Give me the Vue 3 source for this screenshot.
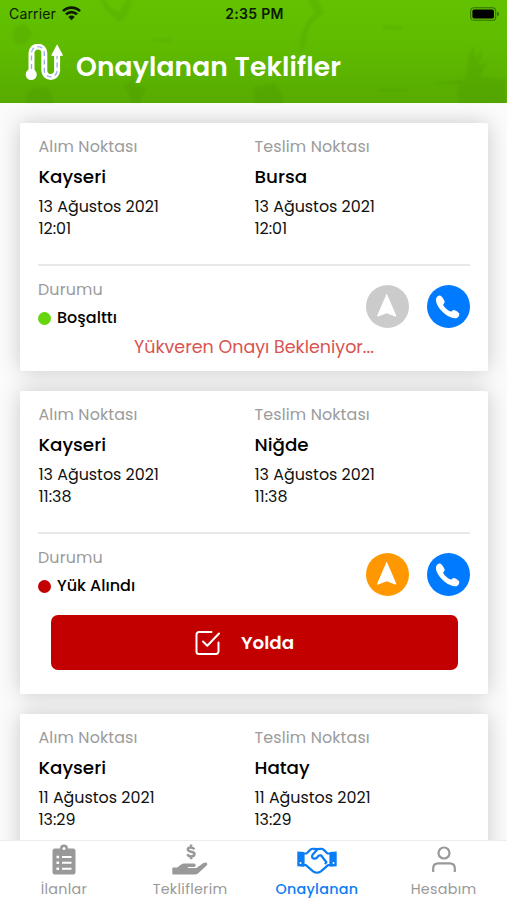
<script setup>
import { ref } from "vue";

const offers = ref([
  {
    id: 1,
    from: { label: "Alım Noktası", city: "Kayseri", date: "13 Ağustos 2021", time: "12:01" },
    to: { label: "Teslim Noktası", city: "Bursa", date: "13 Ağustos 2021", time: "12:01" },
    status: "Boşalttı",
    statusClass: "green",
    navActive: false,
    note: "Yükveren Onayı Bekleniyor...",
  },
  {
    id: 2,
    from: { label: "Alım Noktası", city: "Kayseri", date: "13 Ağustos 2021", time: "11:38" },
    to: { label: "Teslim Noktası", city: "Niğde", date: "13 Ağustos 2021", time: "11:38" },
    status: "Yük Alındı",
    statusClass: "red",
    navActive: true,
    action: "Yolda",
  },
  {
    id: 3,
    from: { label: "Alım Noktası", city: "Kayseri", date: "11 Ağustos 2021", time: "13:29" },
    to: { label: "Teslim Noktası", city: "Hatay", date: "11 Ağustos 2021", time: "13:29" },
  },
]);

const tabs = [
  { key: "list", label: "İlanlar" },
  { key: "offers", label: "Tekliflerim" },
  { key: "approved", label: "Onaylanan" },
  { key: "account", label: "Hesabım" },
];

const activeTab = ref("approved");
</script>

<template>
  <div class="screen">
    <header class="header">
      <svg class="header-map" viewBox="0 0 507 104" preserveAspectRatio="none">
        <path d="M100 0l6 10 13 12 8-6 5-16h-5l-7 12-10-4-5-8z" />
        <path d="M14 29q8-8 14-2l4 7-7 10q-9 3-12-5z" />
        <path d="M308 0h10l5 13-11 10-5 10-2 13-5 7 1-16 6-16 8-7z" />
        <path d="M466 80l3-25 5-9 1 14 8-11-4 17 8-3-7 14 25 3v24h-46l-1-18-25-2z" />
        <path d="M123 87l6-4 4-6 3 9 12 4-6 6-2 8h-8l-3-9z" />
        <path d="M28 94q8-9 20-5l6 15H25z" />
        <path d="M254 88l20-4 8 10 1 10h-29z" />
        <path d="M152 40h20v2h-20zM382 26l20 1v3l-18-1zM378 90h30v2h-30z" />
      </svg>

      <div class="status-bar">
        <div class="carrier">
          <span>Carrier</span>
          <svg width="19" height="15" viewBox="0 0 19 15">
            <path d="M1 5.2a12 12 0 0 1 17 0M4 8.4a7.8 7.8 0 0 1 11 0" fill="none" stroke="#0b1a00" stroke-width="2.6" />
            <path d="M6.3 10.9a4.6 4.6 0 0 1 6.4 0L9.5 14.3z" fill="#0b1a00" />
          </svg>
        </div>
        <span class="clock">2:35 PM</span>
        <svg class="battery" width="30" height="14" viewBox="0 0 30 14">
          <rect x=".7" y=".7" width="25" height="12.6" rx="3.4" fill="none" stroke="#347000" stroke-width="1.1" />
          <rect x="2.4" y="2.4" width="21.6" height="9.2" rx="1.8" fill="#000" />
          <path d="M27.2 4.8q2 .6 2 2.2t-2 2.2z" fill="#347000" />
        </svg>
      </div>

      <div class="title-row">
        <svg class="route" width="40" height="38" viewBox="0 0 40 38">
          <path d="M7.500 29V9a6.400 6.400 0 0 1 12.800 0V26.500a6.400 6.400 0 0 0 12.800 0V9" fill="none" stroke="#fff" stroke-width="6" />
          <circle cx="7.200" cy="30.500" r="5.500" fill="#fff" />
          <path d="M33.100.3l6 11.200q-6 1.600-12 0z" fill="#fff" />
          <path d="M7.500 25V9a6.400 6.400 0 0 1 12.800 0V26.500a6.400 6.400 0 0 0 12.800 0V12" fill="none" stroke="#8fb0ee" stroke-width="1.300" stroke-dasharray="5 3.400" />
        </svg>
        <h1>Onaylanan Teklifler</h1>
      </div>
    </header>

    <main class="content">
      <article v-for="offer in offers" :key="offer.id" class="card">
        <div class="points">
          <div v-for="point in [offer.from, offer.to]" :key="point.label" class="point">
            <div class="label">{{ point.label }}</div>
            <div class="city">{{ point.city }}</div>
            <div class="date">{{ point.date }}</div>
            <div class="date">{{ point.time }}</div>
          </div>
        </div>

        <div v-if="offer.status" class="status-row">
          <div>
            <div class="label">Durumu</div>
            <div class="status">
              <span class="dot" :class="offer.statusClass"></span>
              <span>{{ offer.status }}</span>
            </div>
          </div>
          <div class="actions">
            <button class="round" :class="offer.navActive ? 'orange' : 'grey'">
              <svg width="43" height="43" viewBox="0 0 43 43">
                <path d="M20.700 8.500l9.500 22q.4 1.400-1 .9l-8.500-3.200-8.500 3.200q-1.400.5-1-.9z" fill="#fff" />
              </svg>
            </button>
            <button class="round blue">
              <svg width="43" height="43" viewBox="0 0 43 43">
                <path d="M9.200 13.500c.6-1.800 2.300-3.100 3.700-2.900 1.700.3 3.700 3.500 4.600 5.400.7 1.600-.7 2.400-1.200 3.300-.5 1.100 2 3.700 3.600 5 1.600 1.400 3.500 2.500 4.300 2.200 1-.4 1.400-1.700 2.900-1.500 1.400.2 4.600 2.300 5.100 3.500.6 1.600-.8 4.200-2.900 4.700-4.600 1-10.900-3.100-15-7.600-3.100-3.500-6.200-8.700-5.100-12.100z" fill="#fff" />
              </svg>
            </button>
          </div>
        </div>

        <p v-if="offer.note" class="note">{{ offer.note }}</p>
        <button v-if="offer.action" class="action">
          <svg width="25" height="25" viewBox="0 0 25 25" fill="none" stroke="#fff" stroke-width="2" stroke-linecap="round" stroke-linejoin="round">
            <path d="M16.500 2H4a2.500 2.500 0 0 0-2.500 2.500v17A2.500 2.500 0 0 0 4 24h17a2.500 2.500 0 0 0 2.500-2.500V12.500" />
            <path d="M8 11.500l4.300 4.300L24 3.500" />
          </svg>
          <span>{{ offer.action }}</span>
        </button>
      </article>
    </main>

    <nav class="tabs">
      <a
        v-for="tab in tabs"
        :key="tab.key"
        class="tab"
        :class="[tab.key, { active: tab.key === activeTab }]"
        @click="activeTab = tab.key">
        <svg v-if="tab.key === 'list'" width="24" height="32" viewBox="0 0 24 32">
          <path d="M3 4.500h5a4 4 0 0 1 8 0h5q2.500 0 2.500 2.500v21Q23.500 30.500 21 30.500H3Q.5 30.500 .5 28V7Q.5 4.500 3 4.500z" fill="currentColor" />
          <circle cx="12" cy="4.500" r="1.500" fill="#fff" />
          <path d="M10 13h9.500M10 18.800h9.500M10 24.700h9.500" stroke="#fff" stroke-width="2" />
          <path d="M4.500 13h2.600M4.500 18.800h2.600M4.500 24.700h2.600" stroke="#fff" stroke-width="2.400" />
        </svg>
        <svg v-else-if="tab.key === 'offers'" width="36" height="32" viewBox="0 0 36 32">
          <path d="M22.300 5.400C21.700 4.100 20.700 3.500 19.100 3.500c-2 0-3.300.7-3.300 2.100 0 2.800 6.700 1.400 6.700 4.400 0 1.500-1.400 2.400-3.400 2.400-1.800 0-3.100-.8-3.700-2.200M19.100.5v3M19.100 12.400v2.800" fill="none" stroke="currentColor" stroke-width="2.500" />
          <path d="M1 23.600h4.200l3.300-2.700q1.800-1.400 4-1.400h9.600q1.600.2 1.600 1.700t-1.600 1.700H16q-.7.500 0 1h8.400l7-5q2-1 3.500.1 1 1.100-.2 2.500l-8.800 8q-1.200.9-2.800.9H1q-.7 0-.7-.8v-5.200q0-.8.7-.8z" fill="currentColor" />
        </svg>
        <svg v-else-if="tab.key === 'approved'" width="40" height="28" viewBox="0 0 40 28">
          <path d="M.3 4.500l6.700.4v14.800L.3 19.200zM39.700 4.500l-6.700.4v14.800l6.700-.5z" fill="currentColor" />
          <path d="M6.500 6.500h3l4-3.900q1.100-1 2.900-.8l3.600.4 3.600-.4q1.700-.2 2.900.8l4 3.900h3v11.700h-2.400l-7.200 6.200q-3.900 2.700-7.800 0l-7.200-6.200H6.500z" fill="none" stroke="currentColor" stroke-width="2.200" stroke-linejoin="round" />
          <path d="M20.500 2.200l-4.700 5.200q-1.800 3.100.8 4.200 2.100.5 3.700-1.400l1.500-1.700 2.200-.2 5.400 6.900-1.400 1.900" fill="none" stroke="currentColor" stroke-width="2.200" stroke-linejoin="round" />
          <circle cx="3.500" cy="16" r="1" fill="#fff" />
          <circle cx="36.500" cy="16" r="1" fill="#fff" />
        </svg>
        <svg v-else width="26" height="28" viewBox="0 0 26 28" fill="none" stroke="currentColor" stroke-width="2.200">
          <circle cx="13" cy="7" r="5.500" />
          <path d="M2.200 26v-3.700q0-5 5-5h11.600q5 0 5 5v3.700" />
        </svg>
        <span>{{ tab.label }}</span>
      </a>
    </nav>
  </div>
</template>

<style>
body {
  margin: 0;
  overflow: hidden;
}
</style>

<style scoped>
.screen {
  display: flex;
  flex-direction: column;
  width: 507px;
  height: 900px;
  overflow: hidden;
  background: #fbfbfb;
  color: #111;
  font-family: Poppins, Inter, "Liberation Sans", sans-serif;
}

button {
  padding: 0;
  border: 0;
  font: inherit;
}

.header {
  position: relative;
  flex: none;
  height: 103px;
  background: linear-gradient(#62c200, #5fbb00 45%, #57ab00);
}

.header-map {
  position: absolute;
  inset: 0;
  width: 100%;
  height: 100%;
  fill: rgba(45, 110, 0, 0.11);
  filter: blur(1px);
}

.status-bar {
  position: relative;
  display: grid;
  grid-template-columns: 1fr auto 1fr;
  align-items: center;
  height: 27px;
  padding: 0 7px 0 9px;
  font-family: Inter, "Liberation Sans", sans-serif;
  font-size: 14px;
  color: #0b1a00;
}

.carrier {
  display: flex;
  align-items: center;
  gap: 6px;
  letter-spacing: 0.15px;
}

.clock {
  font-weight: 600;
  letter-spacing: 0.3px;
}

.battery {
  justify-self: end;
}

.title-row {
  position: relative;
  display: flex;
  align-items: center;
  gap: 12px;
  padding: 16px 0 0 24px;
}

h1 {
  margin: 8px 0 0;
  font-size: 26.5px;
  line-height: 32px;
  font-weight: 600;
  letter-spacing: 0.15px;
  color: #fff;
}

.content {
  flex: 1;
  min-height: 0;
  overflow: hidden;
  padding: 20px 19px 0 20px;
}

.card {
  padding: 11px 18px 11px;
  margin-bottom: 20px;
  border-radius: 2px;
  background: #fff;
  box-shadow: 0 0 22px rgba(0, 0, 0, 0.2);
}

.points {
  display: grid;
  grid-template-columns: 1fr 1fr;
  height: 130px;
  border-bottom: 2px solid #e8e8e8;
}

.point {
  padding: 1px 0 0 0.5px;
}

.label {
  font-size: 15.9px;
  line-height: 24px;
  letter-spacing: 0.14px;
  color: #9b9b9b;
}

.city {
  margin: 4px 0 5px;
  font-size: 18.3px;
  line-height: 28px;
  font-weight: 500;
  color: #000;
}

.date {
  font-size: 15.9px;
  line-height: 22px;
}

.status-row {
  display: flex;
  justify-content: space-between;
  height: 69px;
  padding-top: 12px;
  box-sizing: border-box;
}

.status {
  display: flex;
  align-items: center;
  gap: 6px;
  margin-top: 5px;
  font-size: 16px;
  line-height: 22px;
  font-weight: 500;
  color: #000;
}

.dot {
  width: 13px;
  height: 13px;
  border-radius: 50%;
}

.dot.green {
  background: #64d60b;
}

.dot.red {
  background: #c30000;
}

.actions {
  display: flex;
  gap: 18px;
  padding-top: 7px;
}

.round {
  width: 43px;
  height: 43px;
  border-radius: 50%;
}

.round svg {
  display: block;
}

.grey {
  background: #cbcbcb;
}

.orange {
  background: #ff9800;
}

.blue {
  background: #007aff;
}

.note {
  margin: 0;
  font-size: 17.5px;
  line-height: 25px;
  text-align: center;
  color: #d9534f;
}

.action {
  display: flex;
  align-items: center;
  justify-content: center;
  gap: 21px;
  box-sizing: border-box;
  width: 407px;
  height: 55px;
  margin: 12px 0 13px 13px;
  padding-right: 20px;
  border-radius: 7px;
  background: #c30000;
  color: #fff;
  font-size: 18.3px;
  font-weight: 600;
}

.tabs {
  position: relative;
  display: grid;
  grid-template-columns: repeat(4, 1fr);
  flex: none;
  height: 60px;
  box-sizing: border-box;
  border-top: 1px solid #ececec;
  background: #fff;
}

.tab {
  display: flex;
  flex-direction: column;
  align-items: center;
  justify-content: space-between;
  padding: 3px 0 1px;
  font-size: 14.3px;
  line-height: 20px;
  letter-spacing: 0.3px;
  color: #999;
}

.tab.list {
  padding-left: 1px;
}

.tab.approved {
  padding-top: 6px;
}

.tab.account {
  padding-top: 5px;
}

.tab.active {
  color: #0a7cf5;
  font-weight: 500;
}
</style>
